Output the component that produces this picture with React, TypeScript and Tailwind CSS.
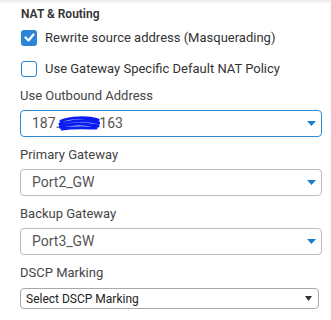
import { ReactNode } from 'react';

function Caret({ dark }: { dark?: boolean }) {
	return dark ? (
		<svg width="7" height="5" viewBox="0 0 7 5" className="shrink-0">
			<path d="M0 0h7L3.5 5z" fill="#333" />
		</svg>
	) : (
		<svg width="9" height="5" viewBox="0 0 9 5" className="shrink-0">
			<path d="M0 0h9L4.5 5z" fill="#1a7fce" />
		</svg>
	);
}

function Field({ label, children, active }: { label: string; children: ReactNode; active?: boolean }) {
	return (
		<div className="flex flex-col">
			<label className="text-[13px] leading-[16px] text-[#454545] mb-[6px]">{label}</label>
			<div
				className={`w-[302px] h-[27px] rounded-[4px] border flex items-center justify-between pl-[11px] pr-[5px] text-[14px] text-[#555] ${
					active ? 'border-[#2a8bd6]' : 'border-[#bdbdbd]'
				}`}
			>
				<span className="flex items-center">{children}</span>
				<Caret />
			</div>
		</div>
	);
}

// blue marker scribble hiding part of the address
function Scribble() {
	return (
		<svg width="42" height="15" viewBox="0 0 42 15" className="-mx-[1px]">
			<path
				d="M3 5 C12 1 30 1 40 4 M2 8 C14 4 30 4 41 7 M2 11 C14 7 30 8 40 10 M4 13 C16 11 30 12 38 12"
				stroke="#0a1cf0"
				strokeWidth="3"
				fill="none"
				strokeLinecap="round"
			/>
		</svg>
	);
}

function Check({ checked, label }: { checked?: boolean; label: string }) {
	return (
		<div className="flex items-center h-[17px] gap-[8px]">
			{checked ? (
				<span className="w-[16px] h-[16px] rounded-[3px] bg-[#2b84d4] flex items-center justify-center">
					<svg width="11" height="9" viewBox="0 0 11 9">
						<path d="M1.5 4.5l3 3 5-6" stroke="#fff" strokeWidth="2.2" fill="none" strokeLinecap="round" strokeLinejoin="round" />
					</svg>
				</span>
			) : (
				<span className="w-[16px] h-[16px] rounded-[3px] border-[1.5px] border-[#2b84d4] bg-white" />
			)}
			<span className="text-[13px] text-[#333]">{label}</span>
		</div>
	);
}

export default function App() {
	return (
		<div
			className="w-[331px] h-[320px] bg-white overflow-hidden relative"
			style={{ fontFamily: 'Roboto, "Liberation Sans", sans-serif' }}
		>
			<div className="absolute inset-x-0 top-0 h-[4px] bg-gradient-to-b from-[#ececec] to-white" />
			<div className="flex flex-col pl-[21px] pt-[7px]">
				<h3 className="text-[12px] leading-[14px] font-semibold text-[#333]">NAT &amp; Routing</h3>

				<div className="flex flex-col gap-[14px] mt-[8px]">
					<Check checked label="Rewrite source address (Masquerading)" />
					<Check label="Use Gateway Specific Default NAT Policy" />
				</div>

				<div className="flex flex-col gap-[10px] mt-[11px] -ml-[1px]">
					<Field label="Use Outbound Address" active>
						187.
						<Scribble />
						163
					</Field>
					<Field label="Primary Gateway">Port2_GW</Field>
					<Field label="Backup Gateway">Port3_GW</Field>

					<div className="flex flex-col">
						<label className="text-[13px] leading-[16px] text-[#454545] mb-[7px]">DSCP Marking</label>
						<div className="w-[299px] h-[21px] rounded-[4px] border border-[#a8a8a8] flex items-center justify-between pl-[5px] pr-[6px] text-[12px] text-[#222]">
							<span>Select DSCP Marking</span>
							<Caret dark />
						</div>
					</div>
				</div>
			</div>
		</div>
	);
}
